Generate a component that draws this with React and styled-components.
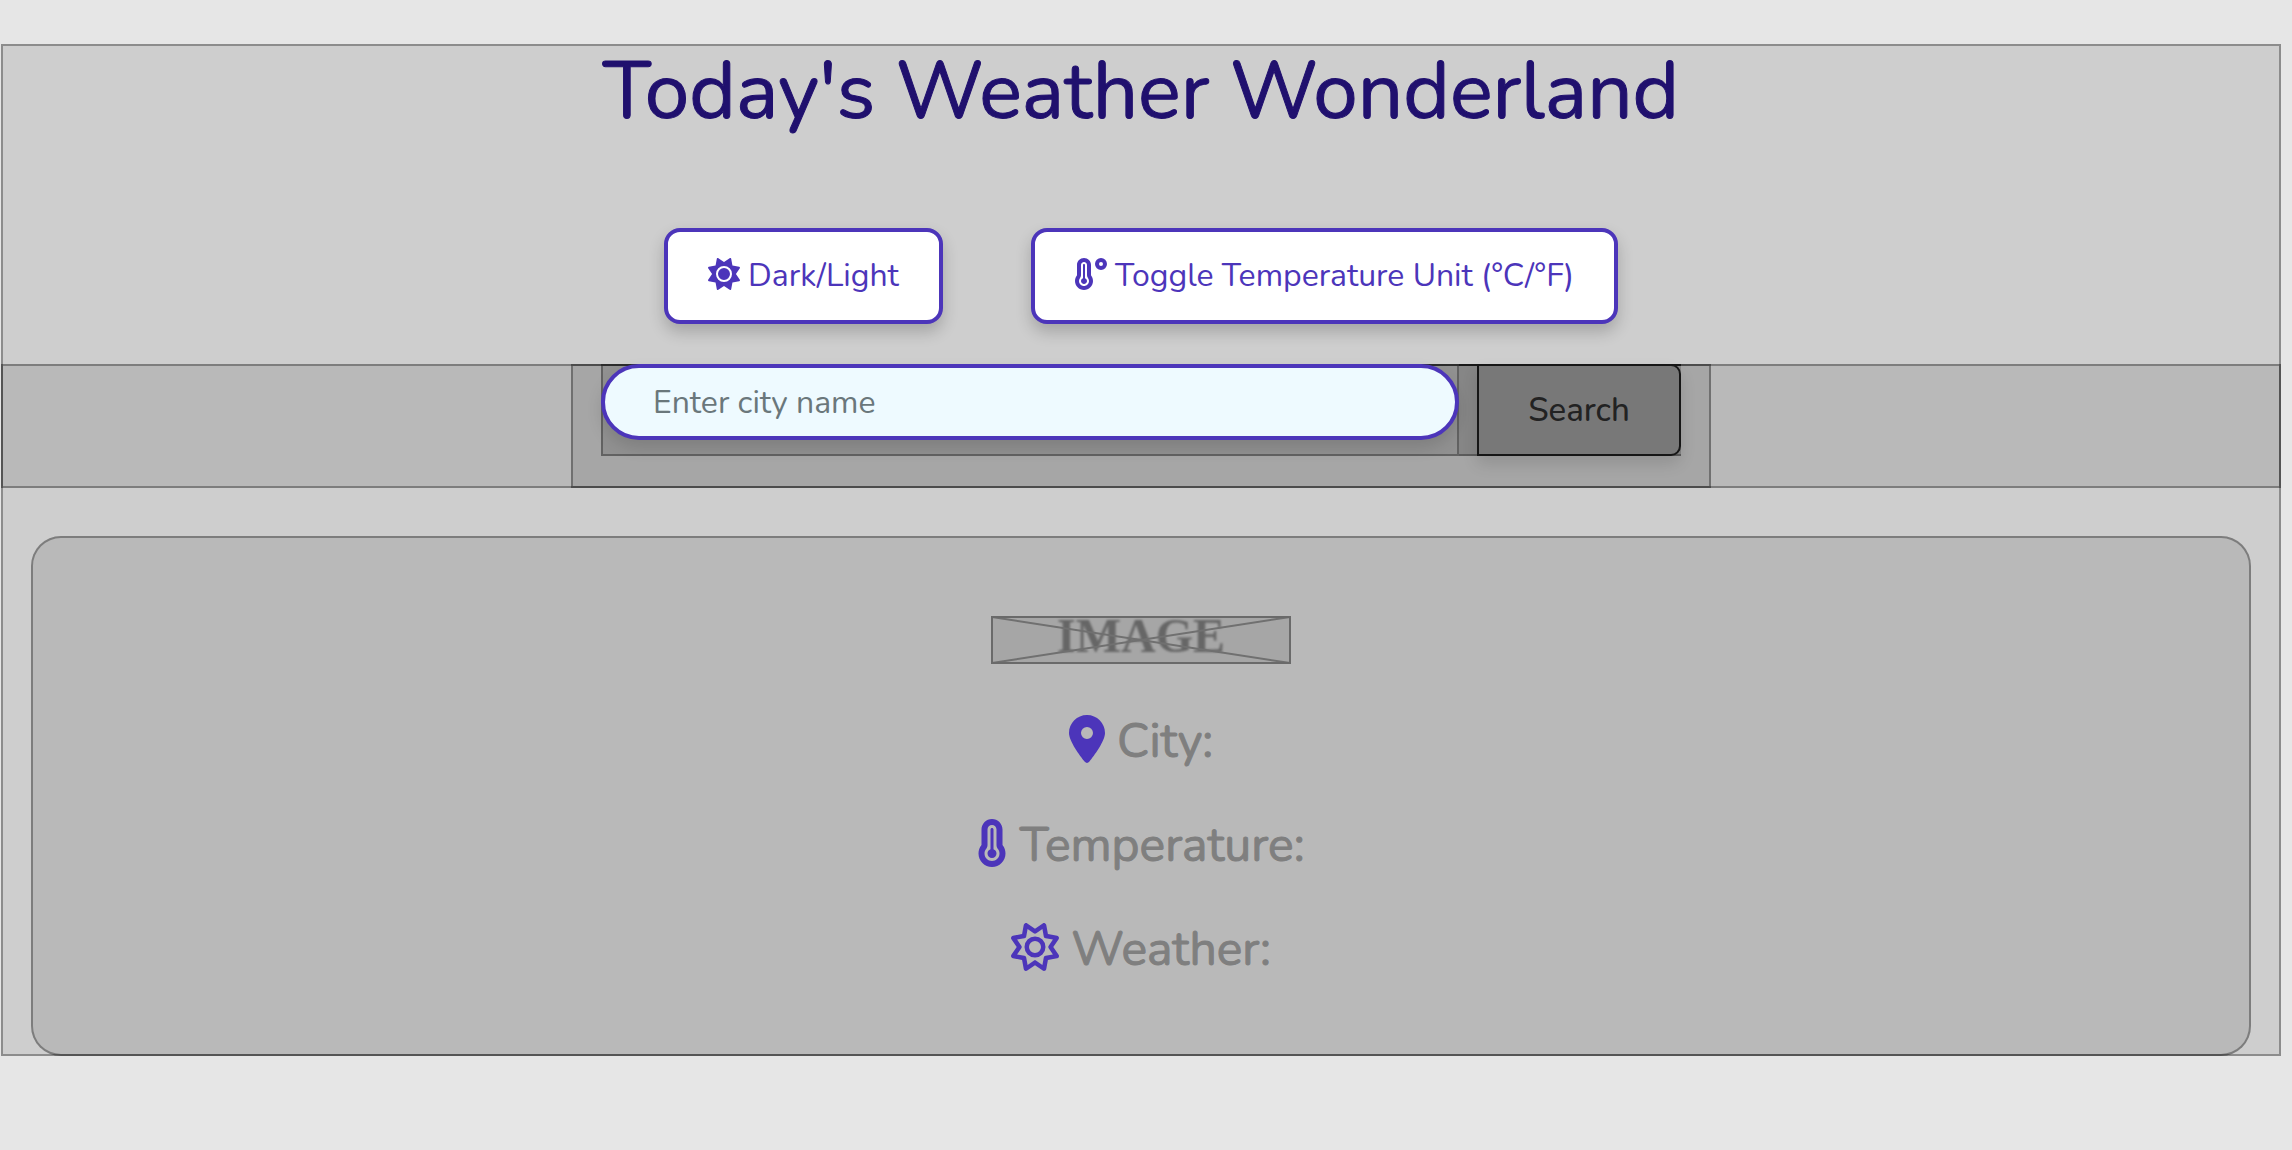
import React, { useState } from "react";
import styled, { createGlobalStyle } from "styled-components";
import {
  FaSun,
  FaRegSun,
  FaTemperatureHigh,
  FaTemperatureFull,
  FaLocationDot,
} from "react-icons/fa6";

const accent = "#4c35ba";
const veil = "rgba(0, 0, 0, 0.1)";
const edge = "inset 0 0 0 2px rgba(0, 0, 0, 0.32)";

const GlobalStyle = createGlobalStyle`
  *, *::before, *::after { box-sizing: border-box; }
  body {
    margin: 0;
    background: #e6e6e6;
    font-family: Nunito, Lato, sans-serif;
    font-size: 32px;
  }
  button, input { font: inherit; }
`;

const Page = styled.main`
  margin: 44px 11px 0 1px;
  background: ${veil};
  box-shadow: ${edge};

  svg { vertical-align: -0.125em; }
`;

const Title = styled.h1`
  margin: 0 0 88px;
  color: #20106e;
  font-size: 80px;
  font-weight: 400;
  line-height: 96px;
  text-align: center;
  -webkit-text-stroke: 1px currentColor;
`;

const Controls = styled.div`
  display: flex;
  flex-wrap: wrap;
  justify-content: center;
  gap: 88px;
  padding-bottom: 40px;
`;

const ControlButton = styled.button`
  height: 96px;
  padding: 0 40px 2px;
  border: 4px solid ${accent};
  border-radius: 16px;
  background: #fff;
  color: ${accent};
  box-shadow: 0 8px 16px rgba(0, 0, 0, 0.2);
  cursor: pointer;
`;

const SearchBand = styled.section`
  background: ${veil};
  box-shadow: ${edge};
`;

const SearchContainer = styled.form`
  max-width: 1140px;
  margin: 0 auto;
  padding: 0 30px 32px;
  background: ${veil};
  box-shadow: ${edge};
`;

const InputGroup = styled.div`
  display: flex;
  height: 92px;
`;

const InputCell = styled.div`
  flex: 1;
  min-width: 0;
  background: rgba(0, 0, 0, 0.12);
  box-shadow: ${edge};
`;

const CityInput = styled.input`
  display: block;
  width: 100%;
  height: 76px;
  padding: 0 48px;
  border: 4px solid ${accent};
  border-radius: 38px;
  background: #eefaff;
  color: #20106e;
  box-shadow: 0 8px 16px rgba(0, 0, 0, 0.12);
  outline: none;

  &::placeholder { color: #6a777b; opacity: 1; }
`;

const ButtonCell = styled.div`
  display: flex;
  padding-left: 18px;
  background: rgba(0, 0, 0, 0.19);
  box-shadow: inset 0 2px rgba(0, 0, 0, 0.6), inset 0 -2px rgba(0, 0, 0, 0.32);
`;

const SearchButton = styled.button`
  width: 204px;
  padding: 0;
  border: 2px solid #161616;
  border-radius: 0 10px 10px 0;
  background: #787878;
  color: #222;
  font-size: 33px;
  font-weight: 500;
  box-shadow: 0 8px 16px rgba(0, 0, 0, 0.12);
  cursor: pointer;
`;

const WeatherCard = styled.section`
  display: flex;
  flex-direction: column;
  align-items: center;
  gap: 46px;
  margin: 48px 30px 0;
  padding: 80px 30px 78px;
  border-radius: 30px;
  background: ${veil};
  box-shadow: ${edge};
`;

const Placeholder = styled.svg`
  display: block;
  width: 300px;
  height: 48px;
  margin-bottom: 2px;
  overflow: visible;
  background: ${veil};

  text {
    font-family: "Liberation Serif", serif;
    font-size: 48px;
    font-weight: 700;
    filter: blur(1px);
  }
`;

const Reading = styled.p`
  margin: 0;
  color: #7f7f7f;
  font-size: 48px;
  font-weight: 400;
  line-height: 58px;
  -webkit-text-stroke: 1px currentColor;

  svg {
    width: ${(p) => p.$iconWidth};
    color: ${accent};
    -webkit-text-stroke: 0;
    stroke: none;
  }
`;

function WeatherImage() {
  return (
    <Placeholder viewBox="0 0 300 48" role="img" aria-label="Weather">
      <text x="150" y="36" textAnchor="middle" fill="#666">IMAGE</text>
      <path d="M1 1 299 47M299 1 1 47" stroke="#707070" strokeWidth="2" />
      <rect x="1" y="1" width="298" height="46" fill="none" stroke="#6a6a6a" strokeWidth="2" />
    </Placeholder>
  );
}

export default function App() {
  const [city, setCity] = useState("");

  return (
    <>
      <GlobalStyle />
      <Page>
        <Title>Today's Weather Wonderland</Title>
        <Controls>
          <ControlButton type="button">
            <FaSun /> Dark/Light
          </ControlButton>
          <ControlButton type="button">
            <FaTemperatureHigh /> Toggle Temperature Unit (°C/°F)
          </ControlButton>
        </Controls>
        <SearchBand>
          <SearchContainer onSubmit={(e) => e.preventDefault()}>
            <InputGroup>
              <InputCell>
                <CityInput
                  aria-label="City name"
                  placeholder="Enter city name"
                  value={city}
                  onChange={(e) => setCity(e.target.value)}
                />
              </InputCell>
              <ButtonCell>
                <SearchButton type="submit">Search</SearchButton>
              </ButtonCell>
            </InputGroup>
          </SearchContainer>
        </SearchBand>
        <WeatherCard>
          <WeatherImage />
          <Reading $iconWidth="36px"><FaLocationDot /> City:</Reading>
          <Reading $iconWidth="30px"><FaTemperatureFull /> Temperature:</Reading>
          <Reading $iconWidth="48px"><FaRegSun /> Weather:</Reading>
        </WeatherCard>
      </Page>
    </>
  );
}
